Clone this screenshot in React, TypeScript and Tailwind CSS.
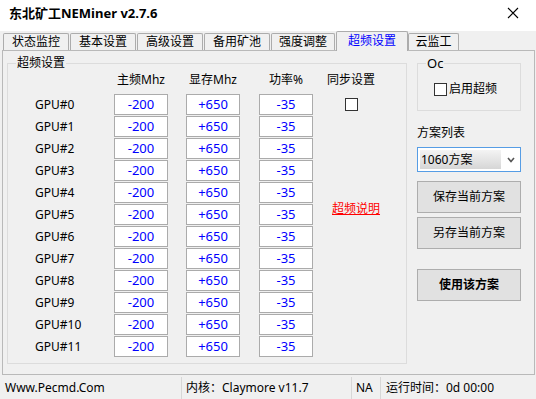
import React from 'react';

const font = { fontFamily: '"Noto Sans", "Noto Sans CJK SC", sans-serif' };

const tabs = [
  { label: '状态监控', w: 'w-[66px]', ml: 'ml-[3px]' },
  { label: '基本设置', w: 'w-[66px]', ml: 'ml-[1px]' },
  { label: '高级设置', w: 'w-[66px]', ml: 'ml-[1px]' },
  { label: '备用矿池', w: 'w-[66px]', ml: 'ml-[1px]' },
  { label: '强度调整', w: 'w-[64px]', ml: 'ml-[1px]' },
  { label: '超频设置', w: 'w-[72px]', ml: 'ml-[1px]', active: true },
  { label: '云监工', w: 'w-[51px]', ml: 'ml-0' },
];

const gpus = Array.from({ length: 12 }, (_, i) => `GPU#${i}`);

const ValueBox: React.FC<{ value: string; width: string }> = ({ value, width }) => (
  <div className={`${width} flex-none`}>
    <div className="w-[54px] h-[21px] bg-white border border-[#ababab] flex items-center justify-center text-[13px] text-[#0000ff]">
      {value}
    </div>
  </div>
);

const CheckBox: React.FC = () => (
  <div className="w-[13px] h-[13px] bg-white border border-[#333333] flex-none" />
);

export default function App() {
  return (
    <div className="w-[536px] h-[399px] bg-[#f0f0f0] flex flex-col overflow-hidden text-[12px] text-black" style={font}>
      {/* title bar */}
      <div className="h-[31px] bg-white flex items-center justify-between pl-[9px] pr-[17px] flex-none">
        <span className="text-[13px] font-bold -mt-[3px]">东北矿工NEMiner v2.7.6</span>
        <svg width="12" height="12" viewBox="0 0 12 12" className="-mt-[6px]">
          <path d="M1 1 L11 11 M11 1 L1 11" stroke="#000" strokeWidth="1.1" />
        </svg>
      </div>

      {/* tabs */}
      <div className="h-[19px] flex items-end flex-none">
        {tabs.map((t) =>
          t.active ? (
            <div
              key={t.label}
              className={`${t.w} ${t.ml} h-[20px] -mb-px relative z-10 bg-[#f0f0f0] border border-b-0 border-[#acacac] rounded-t-[2px] flex items-center justify-center text-[#0000ff] pb-[1px]`}
            >
              {t.label}
            </div>
          ) : (
            <div
              key={t.label}
              className={`${t.w} ${t.ml} h-[17px] bg-[#f0f0f0] border border-b-0 border-[#acacac] rounded-t-[2px] flex items-center justify-center`}
            >
              {t.label}
            </div>
          )
        )}
      </div>

      {/* panel */}
      <div className="ml-[2px] w-[533px] h-[325px] border border-[#b9b9b9] flex flex-none">
        <fieldset className="ml-[4px] mt-[4px] w-[400px] h-[309px] border border-[#dcdcdc] flex-none">
          <legend className="ml-[8px] px-[1px] leading-[16px]">超频设置</legend>
          <div className="flex pl-[27px]">
            <div className="flex flex-col">
              <div className="flex mt-[1px] h-[16px] leading-[16px]">
                <div className="w-[79px]" />
                <div className="w-[72px]"><div className="w-[54px] text-center">主频Mhz</div></div>
                <div className="w-[73px]"><div className="w-[54px] text-center">显存Mhz</div></div>
                <div className="w-[65px]"><div className="w-[54px] text-center">功率%</div></div>
              </div>
              <div className="flex flex-col gap-[1px] mt-[6px]">
                {gpus.map((g) => (
                  <div key={g} className="flex items-center h-[21px]">
                    <div className="w-[79px] flex-none">{g}</div>
                    <ValueBox value="-200" width="w-[72px]" />
                    <ValueBox value="+650" width="w-[73px]" />
                    <ValueBox value="-35" width="w-[65px]" />
                  </div>
                ))}
              </div>
            </div>
            <div className="w-[54px] flex flex-col items-center">
              <div className="mt-[1px] h-[16px] leading-[16px] whitespace-nowrap">同步设置</div>
              <div className="mt-[10px]"><CheckBox /></div>
              <a className="mt-[90px] self-start ml-[8px] text-[#ff0000] underline leading-[16px] whitespace-nowrap cursor-pointer">
                超频说明
              </a>
            </div>
          </div>
        </fieldset>

        <div className="ml-[10px] w-[104px] flex flex-col flex-none">
          <fieldset className="mt-[4px] h-[56px] border border-[#dcdcdc]">
            <legend className="ml-[8px] px-[1px] leading-[16px] text-[13px]">Oc</legend>
            <div className="flex items-center gap-[2px] pl-[16px] mt-[10px]">
              <CheckBox />
              <span className="leading-[16px]">启用超频</span>
            </div>
          </fieldset>

          <div className="mt-[14px] leading-[16px]">方案列表</div>

          <div className="mt-[6px] h-[25px] bg-white border border-[#569de5] flex items-center pl-[2px] pr-[5px]">
            <div className="w-[81px] h-[19px] bg-gradient-to-b from-[#f4f4f4] to-[#d6d6d6] flex items-center pl-[1px]">1060方案</div>
            <svg width="8" height="6" viewBox="0 0 8 6" className="ml-auto">
              <path d="M1 1 L4 4.5 L7 1" stroke="#555" strokeWidth="1.6" fill="none" />
            </svg>
          </div>

          <button className="mt-[9px] h-[32px] bg-[#e1e1e1] border border-[#adadad] text-[12px] text-black">保存当前方案</button>
          <button className="mt-[4px] h-[32px] bg-[#e1e1e1] border border-[#adadad] text-[12px] text-black">另存当前方案</button>
          <button className="mt-[20px] h-[32px] bg-[#e1e1e1] border border-[#adadad] text-[12px] font-bold text-black">使用该方案</button>
        </div>
      </div>

      {/* status bar */}
      <div className="flex-1 flex items-stretch pt-[2px]">
        <div className="w-[181px] pl-[5px] flex items-center">Www.Pecmd.Com</div>
        <div className="w-[170px] pl-[4px] border-l border-[#d7d7d7] flex items-center">内核：Claymore v11.7</div>
        <div className="w-[29px] pl-[4px] border-l border-[#d7d7d7] flex items-center">NA</div>
        <div className="flex-1 pl-[5px] border-l border-[#d7d7d7] flex items-center">运行时间：0d 00:00</div>
      </div>
    </div>
  );
}
